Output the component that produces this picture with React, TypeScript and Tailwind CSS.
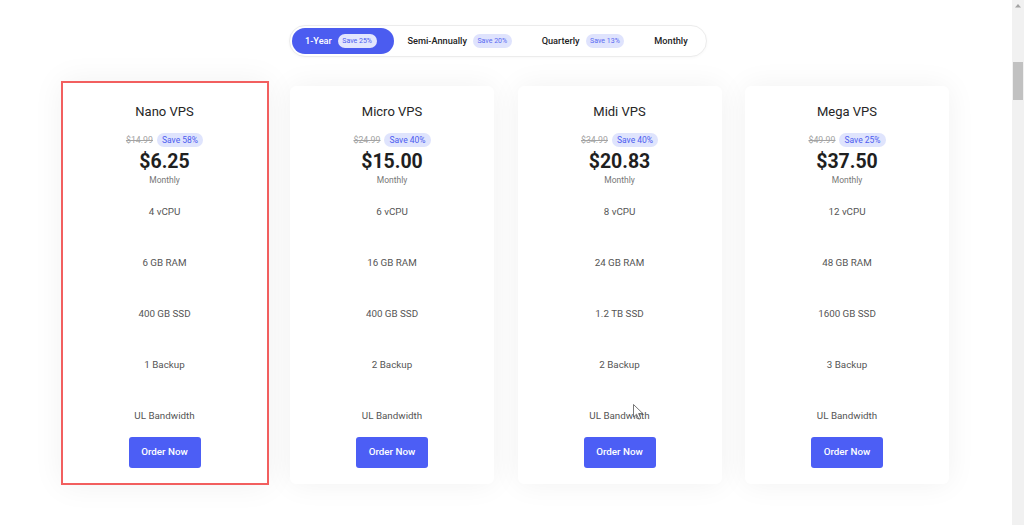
import React from "react";

type Plan = {
  name: string;
  old: string;
  save: string;
  price: string;
  features: string[];
};

const plans: Plan[] = [
  { name: "Nano VPS", old: "$14.99", save: "Save 58%", price: "$6.25", features: ["4 vCPU", "6 GB RAM", "400 GB SSD", "1 Backup", "UL Bandwidth"] },
  { name: "Micro VPS", old: "$24.99", save: "Save 40%", price: "$15.00", features: ["6 vCPU", "16 GB RAM", "400 GB SSD", "2 Backup", "UL Bandwidth"] },
  { name: "Midi VPS", old: "$34.99", save: "Save 40%", price: "$20.83", features: ["8 vCPU", "24 GB RAM", "1.2 TB SSD", "2 Backup", "UL Bandwidth"] },
  { name: "Mega VPS", old: "$49.99", save: "Save 25%", price: "$37.50", features: ["12 vCPU", "48 GB RAM", "1600 GB SSD", "3 Backup", "UL Bandwidth"] },
];

const tabs = [
  { label: "1-Year", save: "Save 25%", active: true },
  { label: "Semi-Annually", save: "Save 20%", active: false },
  { label: "Quarterly", save: "Save 13%", active: false },
  { label: "Monthly", save: "", active: false },
];

function CardBody({ plan }: { plan: Plan }) {
  return (
    <>
      <div className="text-[13px] leading-[16px] text-[#262626]">{plan.name}</div>
      <div className="mt-[13px] flex h-[14px] items-center gap-[4px]">
        <span className="text-[8.8px] leading-[12px] text-[#a3a3a3] line-through">{plan.old}</span>
        <span className="flex h-[14px] items-center rounded-full bg-[#dfe4fd] px-[5px] text-[8.5px] leading-[14px] text-[#4c5cf0]">
          {plan.save}
        </span>
      </div>
      <div className="mt-[3px] text-[19.5px] font-bold leading-[24px] text-[#1f1f1f]">{plan.price}</div>
      <div className="mt-[0px] text-[8.5px] leading-[12px] text-[#777]">Monthly</div>
      <div className="mt-[19px] flex flex-col items-center gap-[37px]">
        {plan.features.map((f) => (
          <div key={f} className="h-[14px] text-[9.8px] leading-[14px] text-[#555]">
            {f}
          </div>
        ))}
      </div>
      <button className="mt-[14px] flex h-[31px] w-[72px] items-center justify-center rounded-[3px] bg-[#4c5ef5] text-[9.8px] font-medium text-white">
        Order Now
      </button>
    </>
  );
}

export default function App() {
  return (
    <div className="relative flex h-[525px] w-[1024px] overflow-hidden bg-white font-['Roboto',sans-serif]">
      <main className="flex flex-1 flex-col">
        <div className="flex pl-[289px] pt-[25px]">
          <div className="flex h-[32px] items-center rounded-full border border-[#ececec] bg-white p-[2px] shadow-[0_1px_3px_rgba(0,0,0,0.03)]">
            {tabs.map((t) => (
              <div
                key={t.label}
                className={
                  t.active
                    ? "flex h-[26px] items-center gap-[6px] rounded-full bg-[#4b5cf0] pl-[13px] pr-[17px]"
                    : "flex h-[26px] items-center gap-[6px] rounded-full pl-[14px] pr-[16px]"
                }
              >
                <span className={t.active ? "text-[9.2px] font-medium text-white" : "text-[9.2px] font-medium text-[#222]"}>
                  {t.label}
                </span>
                {t.save && (
                  <span
                    className={
                      t.active
                        ? "flex h-[14px] items-center rounded-full bg-[#e3e6fd] px-[4.5px] text-[7px] text-[#4b5cf0]"
                        : "flex h-[14px] items-center rounded-full bg-[#dfe3fd] px-[4.5px] text-[7px] text-[#5a6af2]"
                    }
                  >
                    {t.save}
                  </span>
                )}
              </div>
            ))}
          </div>
        </div>

        <div className="mt-[24px] flex items-start pl-[60.5px]">
          <div className="flex h-[404px] w-[208px] flex-col items-center border-2 border-[#f25f5f] bg-white pt-[21px] shadow-[0_0_30px_rgba(0,0,0,0.06)]">
            <CardBody plan={plans[0]} />
          </div>
          {plans.slice(1).map((p, i) => (
            <div
              key={p.name}
              className={
                (i === 0 ? "ml-[21.5px] " : "ml-[23.5px] ") +
                "mt-[5px] flex h-[398px] w-[204px] flex-col items-center rounded-[6px] bg-white pt-[18px] shadow-[0_0_30px_rgba(0,0,0,0.06)]"
              }
            >
              <CardBody plan={p} />
            </div>
          ))}
        </div>
      </main>

      <div className="flex h-[525px] w-[12px] flex-col items-center bg-[#f1f1f1]">
        <svg width="8" height="6" viewBox="0 0 8 6" className="mt-[3px]">
          <path d="M4 1 L7 4.5 L1 4.5 Z" fill="#a3a3a3" />
        </svg>
        <div className="mt-[53px] h-[38px] w-[10px] bg-[#c1c1c1]" />
      </div>

      <svg
        className="absolute left-[633px] top-[404px]"
        width="12"
        height="17"
        viewBox="0 0 12 17"
      >
        <path d="M0.5 0.5 L0.5 13 L3.5 10.2 L5.8 15.2 L7.8 14.3 L5.6 9.5 L9.8 9.5 Z" fill="white" stroke="#555" strokeWidth="0.8" strokeLinejoin="round" />
      </svg>
    </div>
  );
}
